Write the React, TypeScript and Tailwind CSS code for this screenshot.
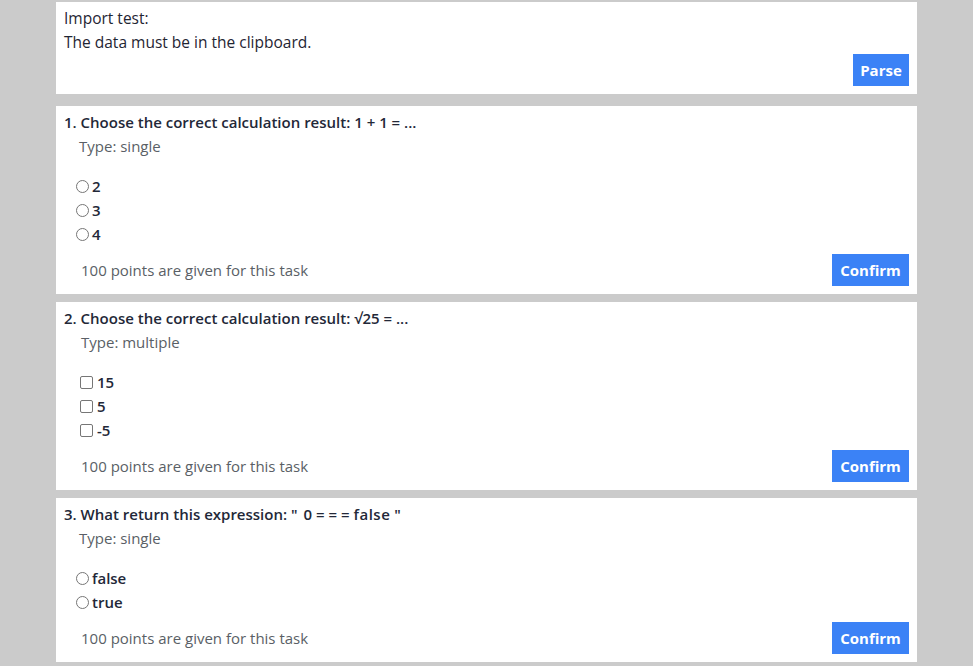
import React from "react";

type Q = {
  title: React.ReactNode;
  key: string;
  type: "single" | "multiple";
  options: string[];
};

const questions: Q[] = [
  { key: "q1", title: "1. Choose the correct calculation result: 1 + 1 = ...", type: "single", options: ["2", "3", "4"] },
  { key: "q2", title: "2. Choose the correct calculation result: \u221A25 = ...", type: "multiple", options: ["15", "5", "-5"] },
  {
    key: "q3",
    title: (
      <>
        3. What return this expression: <span className="tracking-[2px]">"</span> 0 <span className="tracking-[4px]">==</span>= <span className="tracking-[0.5px]">false</span> <span>"</span>
      </>
    ),
    type: "single",
    options: ["false", "true"],
  },
];

function Radio() {
  return <span className="inline-block w-[13px] h-[13px] rounded-full border border-[#767676] bg-white mr-[3px]" />;
}

function Check() {
  return <span className="inline-block w-[13px] h-[13px] rounded-[2px] border border-[#767676] bg-white mr-[4px]" />;
}

function Card({ q }: { q: Q }) {
  const multi = q.type === "multiple";
  return (
    <div className="bg-white pt-[4px] pb-[8px] pr-[8px] pl-[8px]">
      <div className="h-[24px] leading-[24px] text-[15px] font-semibold text-[#232838]">{q.title}</div>
      <div className={`h-[24px] leading-[24px] text-[15px] text-[#5a5f66] ${multi ? "pl-[17px]" : "pl-[15px]"}`}>
        Type: {q.type}
      </div>
      <div className={`mt-[16px] flex flex-col ${multi ? "pl-[16px]" : "pl-[12px]"}`}>
        {q.options.map((o) => (
          <div key={o} className="h-[24px] flex items-center text-[15px] font-semibold text-[#232838]">
            {multi ? <Check /> : <Radio />}
            <span>{o}</span>
          </div>
        ))}
      </div>
      <div className="mt-[8px] h-[32px] flex items-center justify-between">
        <span className="pl-[17px] text-[15px] text-[#5a5f66]">100 points are given for this task</span>
        <button className="h-[32px] w-[77px] bg-[#3b82f6] text-white text-[15px] font-bold">Confirm</button>
      </div>
    </div>
  );
}

export default function App() {
  return (
    <div
      className="min-h-[666px] w-full bg-[#cbcbcb] pt-[2px] pb-[4px]"
      style={{ fontFamily: '"Open Sans", "Noto Sans", sans-serif' }}
    >
      <div className="mx-[56px] flex flex-col gap-[8px]">
        <div className="bg-white pt-[4px] pb-[8px] px-[8px] mb-[4px]">
          <div className="h-[24px] leading-[24px] text-[15.5px] text-[#1f2533]">Import test:</div>
          <div className="h-[24px] leading-[24px] text-[15.5px] text-[#1f2533]">The data must be in the clipboard.</div>
          <div className="flex justify-end">
            <button className="h-[32px] w-[56px] bg-[#3b82f6] text-white text-[15px] font-bold">Parse</button>
          </div>
        </div>
        {questions.map((q) => (
          <Card key={q.key} q={q} />
        ))}
      </div>
    </div>
  );
}
